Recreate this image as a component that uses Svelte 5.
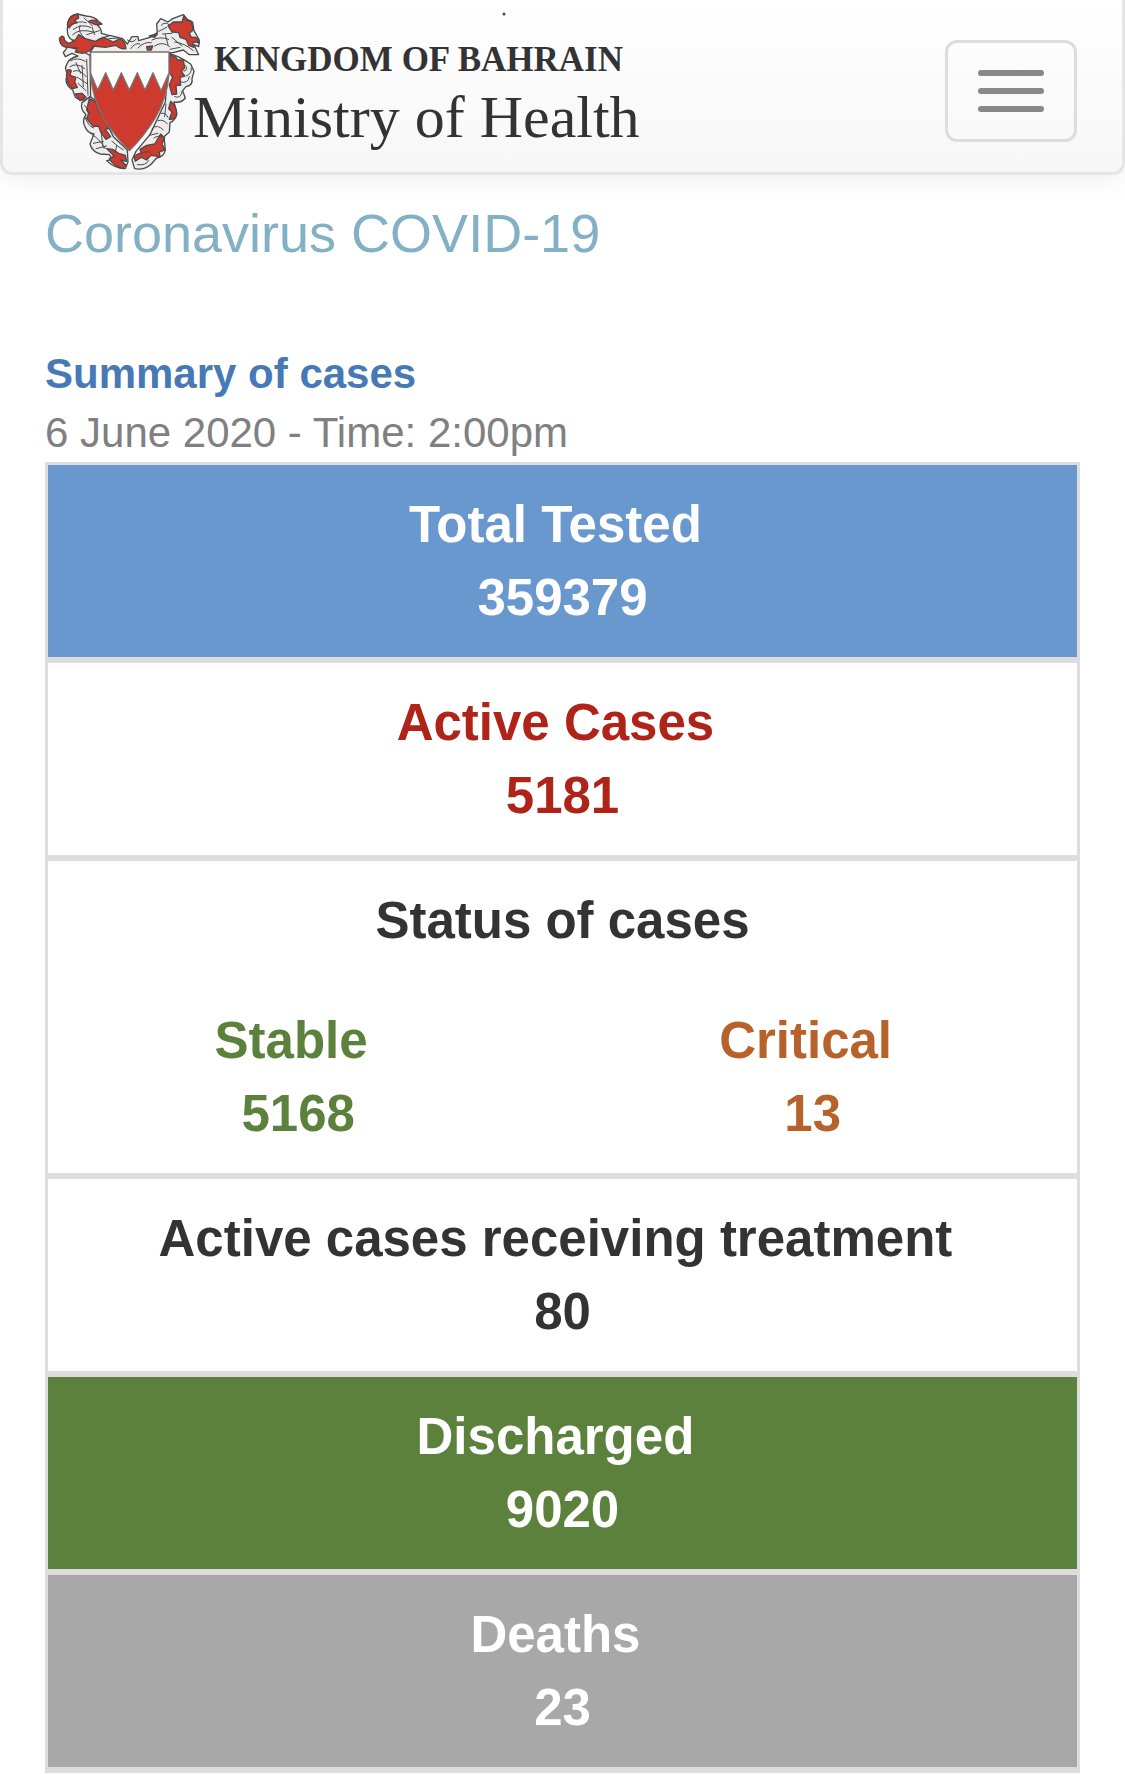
<script>
  const nbsp = '\u00a0';

  const date = '6 June 2020 - Time: 2:00pm';

  const before = [
    { label: 'Total Tested', value: 359379, tone: 'tested' },
    { label: 'Active Cases', value: 5181, tone: 'active' }
  ];

  const status = [
    { label: 'Stable', value: 5168, tone: 'stable' },
    { label: 'Critical', value: 13, tone: 'critical' }
  ];

  const after = [
    { label: 'Active cases receiving treatment', value: 80, tone: 'treatment' },
    { label: 'Discharged', value: 9020, tone: 'discharged' },
    { label: 'Deaths', value: 23, tone: 'deaths' }
  ];

  let menuOpen = $state(false);
</script>

{#snippet figure(item)}
  <div class="box {item.tone}">
    <p>{item.label}{nbsp}</p>
    <p>{item.value}</p>
  </div>
{/snippet}

<header class="navbar">
  <a class="brand" href="#home" aria-label="Kingdom of Bahrain, Ministry of Health">
    <svg width="600" height="162" viewBox="0 0 600 162">
      <g transform="translate(-10 -10) scale(0.3333)" stroke="#4a4a4a" stroke-width="4" stroke-linejoin="round" stroke-linecap="round">
        <!-- mantling, silver then red, then the folds -->
        <g fill="#ededed">
          <path d="M84 70 Q88 44 112 42 L138 48 Q168 50 176 66 L184 72 L172 76 Q186 88 184 100 L206 106 L218 122 L150 128 L96 120 Q76 108 84 70Z" />
          <path d="M68 136 L82 142 L70 158 L76 170 L96 160 L114 168 Q84 176 80 194 Q72 208 84 222 L78 238 Q78 258 98 270 L106 292 Q120 304 140 298 L152 290 L150 166 L120 150Z" />
          <path d="M126 308 Q120 328 138 344 Q124 364 136 382 Q142 400 162 402 L150 432 Q156 454 180 462 L208 464 Q222 480 200 482 Q224 506 256 506 L264 486 L262 450 L220 410 L166 300 L150 290Z" />
          <path d="M176 118 L210 106 L248 116 L262 132 L276 110 L294 110 L296 122 L330 112 L352 98 L350 72 L362 56 L384 66 L398 56 L430 44 L442 58 L458 66 L462 92 L478 120 L476 140 L462 134 L476 164 L448 164 L430 150 L400 158 L150 158Z" />
          <path d="M388 160 L414 170 L430 178 L452 192 L462 214 L456 236 Q460 256 438 260 L428 272 L436 294 Q424 310 402 306 L410 340 Q408 360 390 368 L388 396 L372 410 L376 450 Q372 472 350 474 L334 492 Q312 512 284 506 L276 480 L288 454 L330 404 L376 306Z" />
        </g>
        <g fill="#cf3a2f">
          <path d="M82 74 Q86 46 114 42 L116 54 L104 62 L112 68 L96 72 L88 84Z" />
          <path d="M146 64 Q162 56 178 66 L186 72 L166 74Z" />
          <path d="M58 116 Q64 104 72 112 Q72 126 88 130 L106 120 L116 104 L136 116 L166 124 L190 112 L220 126 L240 116 Q256 124 258 146 Q240 148 228 136 L196 142 L160 138 L150 152 L128 160 L106 156 L112 144 L86 142 Q60 142 58 116Z" />
          <path d="M80 212 Q88 206 94 212 L90 226 L108 232 L104 246 L112 262 L98 266 Q76 250 80 212Z" />
          <path d="M106 282 L126 280 L138 292 L120 302Z" />
          <path d="M148 296 L166 304 L178 334 L202 372 L206 386 L196 388 L212 410 L198 418 L182 396 L176 378 L160 380 L140 356 L146 340 L140 330Z" />
          <path d="M200 446 L218 448 L236 460 L256 466 L260 484 L242 480 L258 496 L248 506 Q220 498 208 476 L222 468Z" />
          <path d="M328 108 L352 102 L344 112Z M320 140 L338 138 L334 150 L322 150Z" />
          <path d="M384 78 L400 66 L426 66 L432 46 L440 60 L454 64 L460 90 L448 100 L454 112 Q476 108 478 130 Q466 122 458 130 L462 142 L446 136 L438 118 L420 112 L416 98 L396 96Z" />
          <path d="M390 164 L408 172 L412 180 L430 180 L434 204 L424 214 L434 228 L420 232 L422 256 L408 256 L410 282 L396 284 L388 254 L398 232 L386 214Z" />
          <path d="M392 304 Q412 320 410 346 Q404 360 388 358 L396 336 L386 326Z" />
          <path d="M362 402 L374 414 L366 432 L376 450 L358 456 L360 470 L332 466 L320 480 L304 472 L286 484 L282 468 L304 458 L300 448 L320 436 L344 432Z" />
        </g>
        <g fill="none" stroke-width="3">
          <path d="M94 76 Q116 60 138 68 M100 88 Q124 70 152 82 M98 104 Q118 84 160 96 M132 54 L158 78 M140 104 L178 92 M120 76 Q112 98 136 116 M156 82 L164 104" />
          <path d="M92 182 Q112 170 136 184 M90 200 Q108 186 134 206 M100 214 Q118 204 138 230 M112 232 L140 250 M114 250 L138 272 M140 178 L144 286 M108 188 L122 220 M126 196 L130 260" />
          <path d="M134 316 L150 340 M134 350 Q146 380 160 384 M156 404 Q176 414 196 446 M160 430 L190 424 M168 446 L200 438 M184 404 L190 444 M216 424 Q234 440 250 450 M230 436 L226 458" />
          <path d="M206 116 L236 114 M262 120 Q276 132 288 118 M272 146 Q286 126 300 132 M294 144 Q312 124 334 128 M336 120 Q360 108 386 118 M344 138 Q366 122 390 140 M364 76 Q374 62 390 76 M356 94 L380 82 M368 102 L396 100 M396 112 L426 138 M404 126 Q436 130 460 152 M390 148 L420 142 M376 104 L384 134" />
          <path d="M434 194 Q448 208 432 214 M438 228 Q456 222 454 204 M420 246 Q446 252 448 230 M404 290 Q424 298 426 274 M378 312 L374 350 M364 340 Q376 336 384 352 M354 362 Q370 356 382 372 M336 386 Q352 370 370 390 M328 406 L354 400 M342 414 Q356 404 366 412 M292 494 Q318 498 326 482 M296 462 Q316 452 330 456" />
        </g>
        <!-- shield -->
        <path fill="#cf3a2f" stroke="#777" d="M152 156 H387 V222 Q382 292 346 354 Q310 412 268 452 Q226 412 190 354 Q156 292 152 222Z" />
        <path fill="#fff" stroke="none" d="M154 158 H385 V220 L363 272 L339 218 L315 270 L292 218 L268 270 L244 218 L220 270 L197 218 L173 270 L154 220Z" />
        <path fill="none" stroke="#777" d="M154 226 L173 270 L197 218 L220 270 L244 218 L268 270 L292 218 L315 270 L339 218 L363 272 L385 224" />
      </g>
      <circle cx="454" cy="4" r="1.5" fill="#444" />
      <text class="kingdom" x="164" y="61">KINGDOM OF BAHRAIN</text>
      <text class="ministry" x="143" y="127">Ministry of Health</text>
    </svg>
  </a>
  <button
    type="button"
    class="toggle"
    aria-label="Toggle navigation"
    aria-expanded={menuOpen}
    onclick={() => (menuOpen = !menuOpen)}
  >
    <span class="bar"></span>
    <span class="bar"></span>
    <span class="bar"></span>
  </button>
</header>

<main>
  <h1>Coronavirus COVID-19</h1>
  <h2>Summary of cases</h2>
  <p class="date">{date}</p>

  <section class="summary">
    {#each before as item (item.label)}
      {@render figure(item)}
    {/each}

    <div class="box">
      <p>Status of cases</p>
      <div class="split">
        {#each status as item (item.label)}
          <div class={item.tone}>
            <p>{item.label}{nbsp}{nbsp}</p>
            <p>{item.value}{nbsp}</p>
          </div>
        {/each}
      </div>
    </div>

    {#each after as item (item.label)}
      {@render figure(item)}
    {/each}
  </section>
</main>

<style>
  :global(body) {
    margin: 0;
    background: #fff;
    color: #333;
    font-family: 'Liberation Sans', Arial, sans-serif;
    overflow-x: hidden;
  }

  p, h1, h2 { margin: 0; }

  .navbar {
    display: flex;
    align-items: flex-start;
    justify-content: space-between;
    padding: 10px 45px 0 47px;
    border: 3px solid #e5e5e5;
    border-top: 0;
    border-radius: 0 0 12px 12px;
    background: linear-gradient(#fff, #f7f7f7);
    box-shadow: 0 3px 27px rgba(0, 0, 0, 0.075);
  }

  .brand { display: block; }
  .brand svg { display: block; }

  .kingdom,
  .ministry {
    font-family: 'Liberation Serif', 'Times New Roman', serif;
    fill: #333;
  }
  .kingdom { font-size: 35px; font-weight: 700; }
  .ministry { font-size: 60px; }

  .toggle {
    display: flex;
    flex-direction: column;
    gap: 12px;
    margin-top: 30px;
    padding: 27px 30px;
    border: 3px solid #ddd;
    border-radius: 12px;
    background: transparent;
    cursor: pointer;
  }
  .bar {
    width: 66px;
    height: 6px;
    border-radius: 3px;
    background: #888;
  }

  main { padding: 24px 45px 0; }

  h1 {
    margin-bottom: 77px;
    font-size: 54px;
    font-weight: 400;
    line-height: 68px;
    color: #82b1c5;
  }
  h2 {
    font-size: 42px;
    line-height: 60px;
    color: #4679b5;
  }
  .date {
    font-size: 42px;
    line-height: 58px;
    color: #808080;
  }

  .summary {
    border-bottom: 3px solid #ddd;
    font-size: 51px;
    font-weight: 700;
    line-height: 73px;
    text-align: center;
  }

  .box {
    padding: 23px 0;
    border: 3px solid #ddd;
  }

  .split {
    display: grid;
    grid-template-columns: 1fr 1fr;
    margin-top: 47px;
  }

  .tested { background: #6998cf; color: #fff; }
  .active { color: #b02318; }
  .stable { color: #5c813d; }
  .critical { color: #b8622b; }
  .discharged { background: #5c813d; color: #fff; }
  .deaths { background: #a8a8a8; color: #fff; }
</style>
